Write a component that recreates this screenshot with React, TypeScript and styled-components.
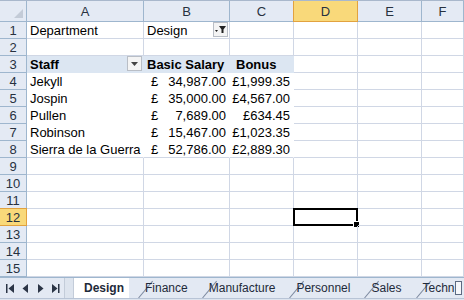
import React from 'react'
import styled, {createGlobalStyle, css} from 'styled-components'

const GlobalStyle = createGlobalStyle`
  html, body {
    margin: 0;
    padding: 0;
    background: #fff;
    overflow: hidden;
  }
  body {
    font-family: "Liberation Sans", Arial, sans-serif;
  }
`

const GRID = '#d0d7e5'
const HEAD_LINE = '#9eb6ce'

const Sheet = styled.div`
  width: 464px;
  height: 300px;
  display: flex;
  flex-direction: column;
  border-top: 1px solid #a9b8cc;
  box-sizing: border-box;
`

const Grid = styled.div`
  display: grid;
  grid-template-columns: 27px 117px 86px 64px 64px 64px 1fr;
  grid-template-rows: 21px repeat(15, 17px);
  font-size: 13px;
  color: #000;
`

const Corner = styled.div`
  position: relative;
  background: #e4eaf4;
  border-right: 1px solid ${HEAD_LINE};
  border-bottom: 1px solid ${HEAD_LINE};
  box-sizing: border-box;

  &::after {
    content: '';
    position: absolute;
    right: 3px;
    bottom: 3px;
    border-left: 9px solid transparent;
    border-bottom: 9px solid #c3cbd7;
  }
`

const ColHead = styled.div<{$active?: boolean}>`
  display: flex;
  align-items: center;
  justify-content: center;
  box-sizing: border-box;
  font-size: 13px;
  color: #27313f;
  background: ${({$active}) => ($active ? '#f9d97a' : '#e4eaf4')};
  border-right: 1px solid ${({$active}) => ($active ? '#e2a23f' : HEAD_LINE)};
  border-bottom: 1px solid ${({$active}) => ($active ? '#e2a23f' : HEAD_LINE)};
  ${({$active}) => $active && css`border-left: 1px solid #e2a23f; margin-left: -1px;`}
`

const RowHead = styled.div<{$active?: boolean}>`
  display: flex;
  align-items: center;
  justify-content: center;
  box-sizing: border-box;
  font-size: 13px;
  color: #27313f;
  background: ${({$active}) => ($active ? '#f9d97a' : '#e4eaf4')};
  border-right: 1px solid ${({$active}) => ($active ? '#e2a23f' : HEAD_LINE)};
  border-bottom: 1px solid ${({$active}) => ($active ? '#e2a23f' : HEAD_LINE)};
  ${({$active}) => $active && css`border-top: 1px solid #e2a23f; margin-top: -1px;`}
`

type CellKind = 'plain' | 'pivotHead' | 'pivot' | 'pivotEnd'

const Cell = styled.div<{$kind?: CellKind; $align?: 'left' | 'right'; $indent?: number}>`
  position: relative;
  display: flex;
  align-items: center;
  justify-content: ${({$align}) => ($align === 'right' ? 'flex-end' : 'flex-start')};
  box-sizing: border-box;
  padding: 0 3px 0 ${({$indent = 3}) => $indent}px;
  white-space: nowrap;
  overflow: visible;
  border-right: 1px solid ${GRID};
  border-bottom: 1px solid ${GRID};
  ${({$kind}) =>
    $kind === 'pivotHead' &&
    css`
      background: #dce6f2;
      font-weight: bold;
      border-right-color: #dce6f2;
      border-bottom-color: #dce6f2;
    `}
  ${({$kind}) =>
    $kind === 'pivot' &&
    css`
      border-right-color: #fff;
      border-bottom-color: #fff;
    `}
  ${({$kind}) =>
    $kind === 'pivotEnd' &&
    css`
      border-right-color: #fff;
    `}
`

const Money = styled.div`
  display: flex;
  width: 100%;
  justify-content: space-between;
  padding-left: 1px;
`

const DropButton = styled.div`
  position: absolute;
  right: 1px;
  top: 0;
  width: 15px;
  height: 15px;
  box-sizing: border-box;
  border: 1px solid #b9bec6;
  background: #f4f4f4;
  display: flex;
  align-items: center;
  justify-content: center;
`

const Selection = styled.div`
  position: absolute;
  left: -1px;
  top: -1px;
  right: -1px;
  bottom: -1px;
  border: 2px solid #000;

  &::after {
    content: '';
    position: absolute;
    right: -4px;
    bottom: -4px;
    width: 5px;
    height: 5px;
    background: #000;
    border: 1px solid #fff;
  }
`

const TabBar = styled.div`
  display: flex;
  align-items: stretch;
  height: 20px;
  background: #e3e9f3;
  border-top: 1px solid #9eb6ce;
  font-size: 12px;
`

const NavButtons = styled.div`
  display: flex;
  align-items: center;
  gap: 6px;
  width: 64px;
  flex-shrink: 0;
  padding-left: 6px;
  box-sizing: border-box;
`

const Splitter = styled.div`
  width: 8px;
  flex-shrink: 0;
  border-left: 1px solid #c3ccd9;
  border-right: 1px solid #c3ccd9;
  background: #dde4ee;
`

const TabList = styled.div`
  flex: 1;
  display: flex;
  overflow: hidden;
`

const Tab = styled.div<{$active?: boolean}>`
  position: relative;
  flex-shrink: 0;
  display: flex;
  align-items: center;
  padding: 0 5px 0 10px;
  margin-right: 6px;
  color: #1e2a3a;
  font-weight: ${({$active}) => ($active ? 'bold' : 'normal')};
  background: ${({$active}) => ($active ? '#fff' : 'transparent')};
  margin-top: -1px;

  &::after {
    content: '';
    position: absolute;
    right: -10px;
    bottom: 0;
    width: 1px;
    height: 22px;
    background: #7d8aa0;
    transform: rotate(40deg);
    transform-origin: bottom;
  }
`

const ScrollThumb = styled.div`
  flex-shrink: 0;
  width: 5px;
  margin: 3px 2px 3px 0;
  border: 1px solid #5d6b82;
  background: #f5f7fb;
`

const Bottom = styled.div`
  flex: 1;
  background: #dde4ee;
  border-top: 1px solid #b8c4d6;
`

const Nav = ({d}: {d: string}) => (
  <svg width="9" height="9" viewBox="0 0 9 9">
    <path d={d} fill="#2b3546" />
  </svg>
)

const Funnel = () => (
  <svg width="11" height="9" viewBox="0 0 11 9">
    <path d="M4 1h7L8.5 4.5V8h-2V4.5Z" fill="#222" />
    <path d="M0 5h3L1.5 7Z" fill="#222" />
  </svg>
)

const Caret = () => (
  <svg width="7" height="4" viewBox="0 0 7 4">
    <path d="M0 0h7L3.5 4Z" fill="#444" />
  </svg>
)

const cols = ['A', 'B', 'C', 'D', 'E', 'F']

type Row = {staff: string; salary: string; bonus: string}
const rows: Row[] = [
  {staff: 'Jekyll', salary: '34,987.00', bonus: '£1,999.35'},
  {staff: 'Jospin', salary: '35,000.00', bonus: '£4,567.00'},
  {staff: 'Pullen', salary: '7,689.00', bonus: '£634.45'},
  {staff: 'Robinson', salary: '15,467.00', bonus: '£1,023.35'},
  {staff: 'Sierra de la Guerra', salary: '52,786.00', bonus: '£2,889.30'},
]

const tabs = ['Design', 'Finance', 'Manufacture', 'Personnel', 'Sales', 'Techn']

export default function App() {
  const cells: React.ReactNode[] = []
  cells.push(<Corner key="corner" />)
  cols.forEach((c) => cells.push(<ColHead key={c} $active={c === 'D'}>{c}</ColHead>))

  for (let r = 1; r <= 15; r++) {
    cells.push(<RowHead key={`h${r}`} $active={r === 12}>{r}</RowHead>)
    const data = rows[r - 4]
    for (let ci = 0; ci < 6; ci++) {
      const key = `${r}-${ci}`
      if (r === 1 && ci === 0) {
        cells.push(<Cell key={key}>Department</Cell>)
      } else if (r === 1 && ci === 1) {
        cells.push(
          <Cell key={key}>
            Design
            <DropButton>
              <Funnel />
            </DropButton>
          </Cell>
        )
      } else if (r === 3 && ci === 0) {
        cells.push(
          <Cell key={key} $kind="pivotHead">
            Staff
            <DropButton>
              <Caret />
            </DropButton>
          </Cell>
        )
      } else if (r === 3 && ci === 1) {
        cells.push(<Cell key={key} $kind="pivotHead">Basic Salary</Cell>)
      } else if (r === 3 && ci === 2) {
        cells.push(<Cell key={key} $kind="pivotHead" $indent={6}>Bonus</Cell>)
      } else if (data && ci < 3) {
        const kind: CellKind = r === 8 ? 'pivotEnd' : 'pivot'
        if (ci === 0) cells.push(<Cell key={key} $kind={kind}>{data.staff}</Cell>)
        else if (ci === 1)
          cells.push(
            <Cell key={key} $kind={kind} $indent={6}>
              <Money>
                <span>£</span>
                <span>{data.salary}</span>
              </Money>
            </Cell>
          )
        else cells.push(<Cell key={key} $kind={kind} $align="right">{data.bonus}</Cell>)
      } else {
        cells.push(<Cell key={key}>{r === 12 && ci === 3 ? <Selection /> : null}</Cell>)
      }
    }
  }

  return (
    <>
      <GlobalStyle />
      <Sheet>
        <Grid>{cells}</Grid>
        <TabBar>
          <NavButtons>
            <Nav d="M0 0h1.5v9H0ZM8 0v9L2.5 4.5Z" />
            <Nav d="M7 0v9L1.5 4.5Z" />
            <Nav d="M2 0v9l5.5-4.5Z" />
            <Nav d="M1 0v9l5.5-4.5ZM7 0h1.5v9H7Z" />
          </NavButtons>
          <Splitter />
          <TabList>
            {tabs.map((t, i) => (
              <Tab key={t} $active={i === 0}>
                {t}
              </Tab>
            ))}
          </TabList>
          <ScrollThumb />
        </TabBar>
        <Bottom />
      </Sheet>
    </>
  )
}
